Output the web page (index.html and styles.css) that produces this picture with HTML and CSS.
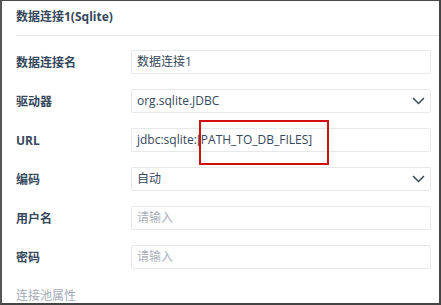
FILE: index.html
```html
<!DOCTYPE html>
<html lang="zh-CN">
<head>
    <meta charset="UTF-8">
    <meta name="viewport" content="width=device-width, initial-scale=1.0">
    <title>数据连接1(Sqlite)</title>
    <link rel="stylesheet" href="styles.css">
</head>
<body>

    <div class="dialog">
        <div class="header">数据连接1(Sqlite)</div>

        <div class="form">
            <div class="row">
                <label class="label">数据连接名</label>
                <div class="field">数据连接1</div>
            </div>

            <div class="row">
                <label class="label">驱动器</label>
                <div class="field select">
                    <span>org.sqlite.JDBC</span>
                    <svg class="arrow" width="13" height="8" viewBox="0 0 13 8"><polyline points="1,1 6.5,6.5 12,1" fill="none" stroke="#3a4a5e" stroke-width="1.5"/></svg>
                </div>
            </div>

            <div class="row">
                <label class="label">URL</label>
                <div class="field url">
                    jdbc:sqlite:[PATH_TO_DB_FILES]
                    <div class="mark"></div>
                </div>
            </div>

            <div class="row">
                <label class="label">编码</label>
                <div class="field select">
                    <span>自动</span>
                    <svg class="arrow" width="13" height="8" viewBox="0 0 13 8"><polyline points="1,1 6.5,6.5 12,1" fill="none" stroke="#3a4a5e" stroke-width="1.5"/></svg>
                </div>
            </div>

            <div class="row">
                <label class="label">用户名</label>
                <div class="field placeholder">请输入</div>
            </div>

            <div class="row">
                <label class="label">密码</label>
                <div class="field placeholder">请输入</div>
            </div>

            <div class="section">连接池属性</div>
        </div>
    </div>

</body>
</html>
```

FILE: styles.css
```css
body {
    margin: 0;
    font-family: 'Open Sans', 'Noto Sans CJK SC', sans-serif;
    color: #35475c;
    background: #fff;
}
.dialog {
    box-sizing: border-box;
    width: 441px;
    height: 305px;
    overflow: hidden;
    border-top: 1px solid #4a4a4a;
    border-left: 2px solid #555;
    border-right: 2px solid #444;
    border-bottom: 2px solid #444;
    background: #fff;
}
.header {
    margin-left: 14px;
    padding: 7px 0 10px;
    line-height: 17px;
    font-size: 12px;
    font-weight: bold;
    border-bottom: 1px solid #e8e8e8;
}
.form {
    padding: 14px 8px 0 14px;
    display: flex;
    flex-direction: column;
    gap: 15px;
}
.row {
    display: flex;
    align-items: center;
    height: 24px;
}
.label {
    width: 115px;
    flex-shrink: 0;
    font-size: 12px;
    font-weight: bold;
}
.field {
    position: relative;
    box-sizing: border-box;
    flex: 1;
    height: 24px;
    padding: 0 5px;
    line-height: 22px;
    font-size: 12px;
    border: 1px solid #e6e8eb;
    border-radius: 2px;
    white-space: nowrap;
}
.select {
    display: flex;
    justify-content: space-between;
    align-items: center;
}
.arrow {
    margin-right: 0;
}
.placeholder {
    color: #a9b0ba;
}
.mark {
    position: absolute;
    left: 67px;
    top: -9px;
    width: 130px;
    height: 45px;
    box-sizing: border-box;
    border: 2px solid #d10f0f;
}
.section {
    margin-top: 3px;
    font-size: 12px;
    line-height: 18px;
    color: #a3abb6;
}
```
